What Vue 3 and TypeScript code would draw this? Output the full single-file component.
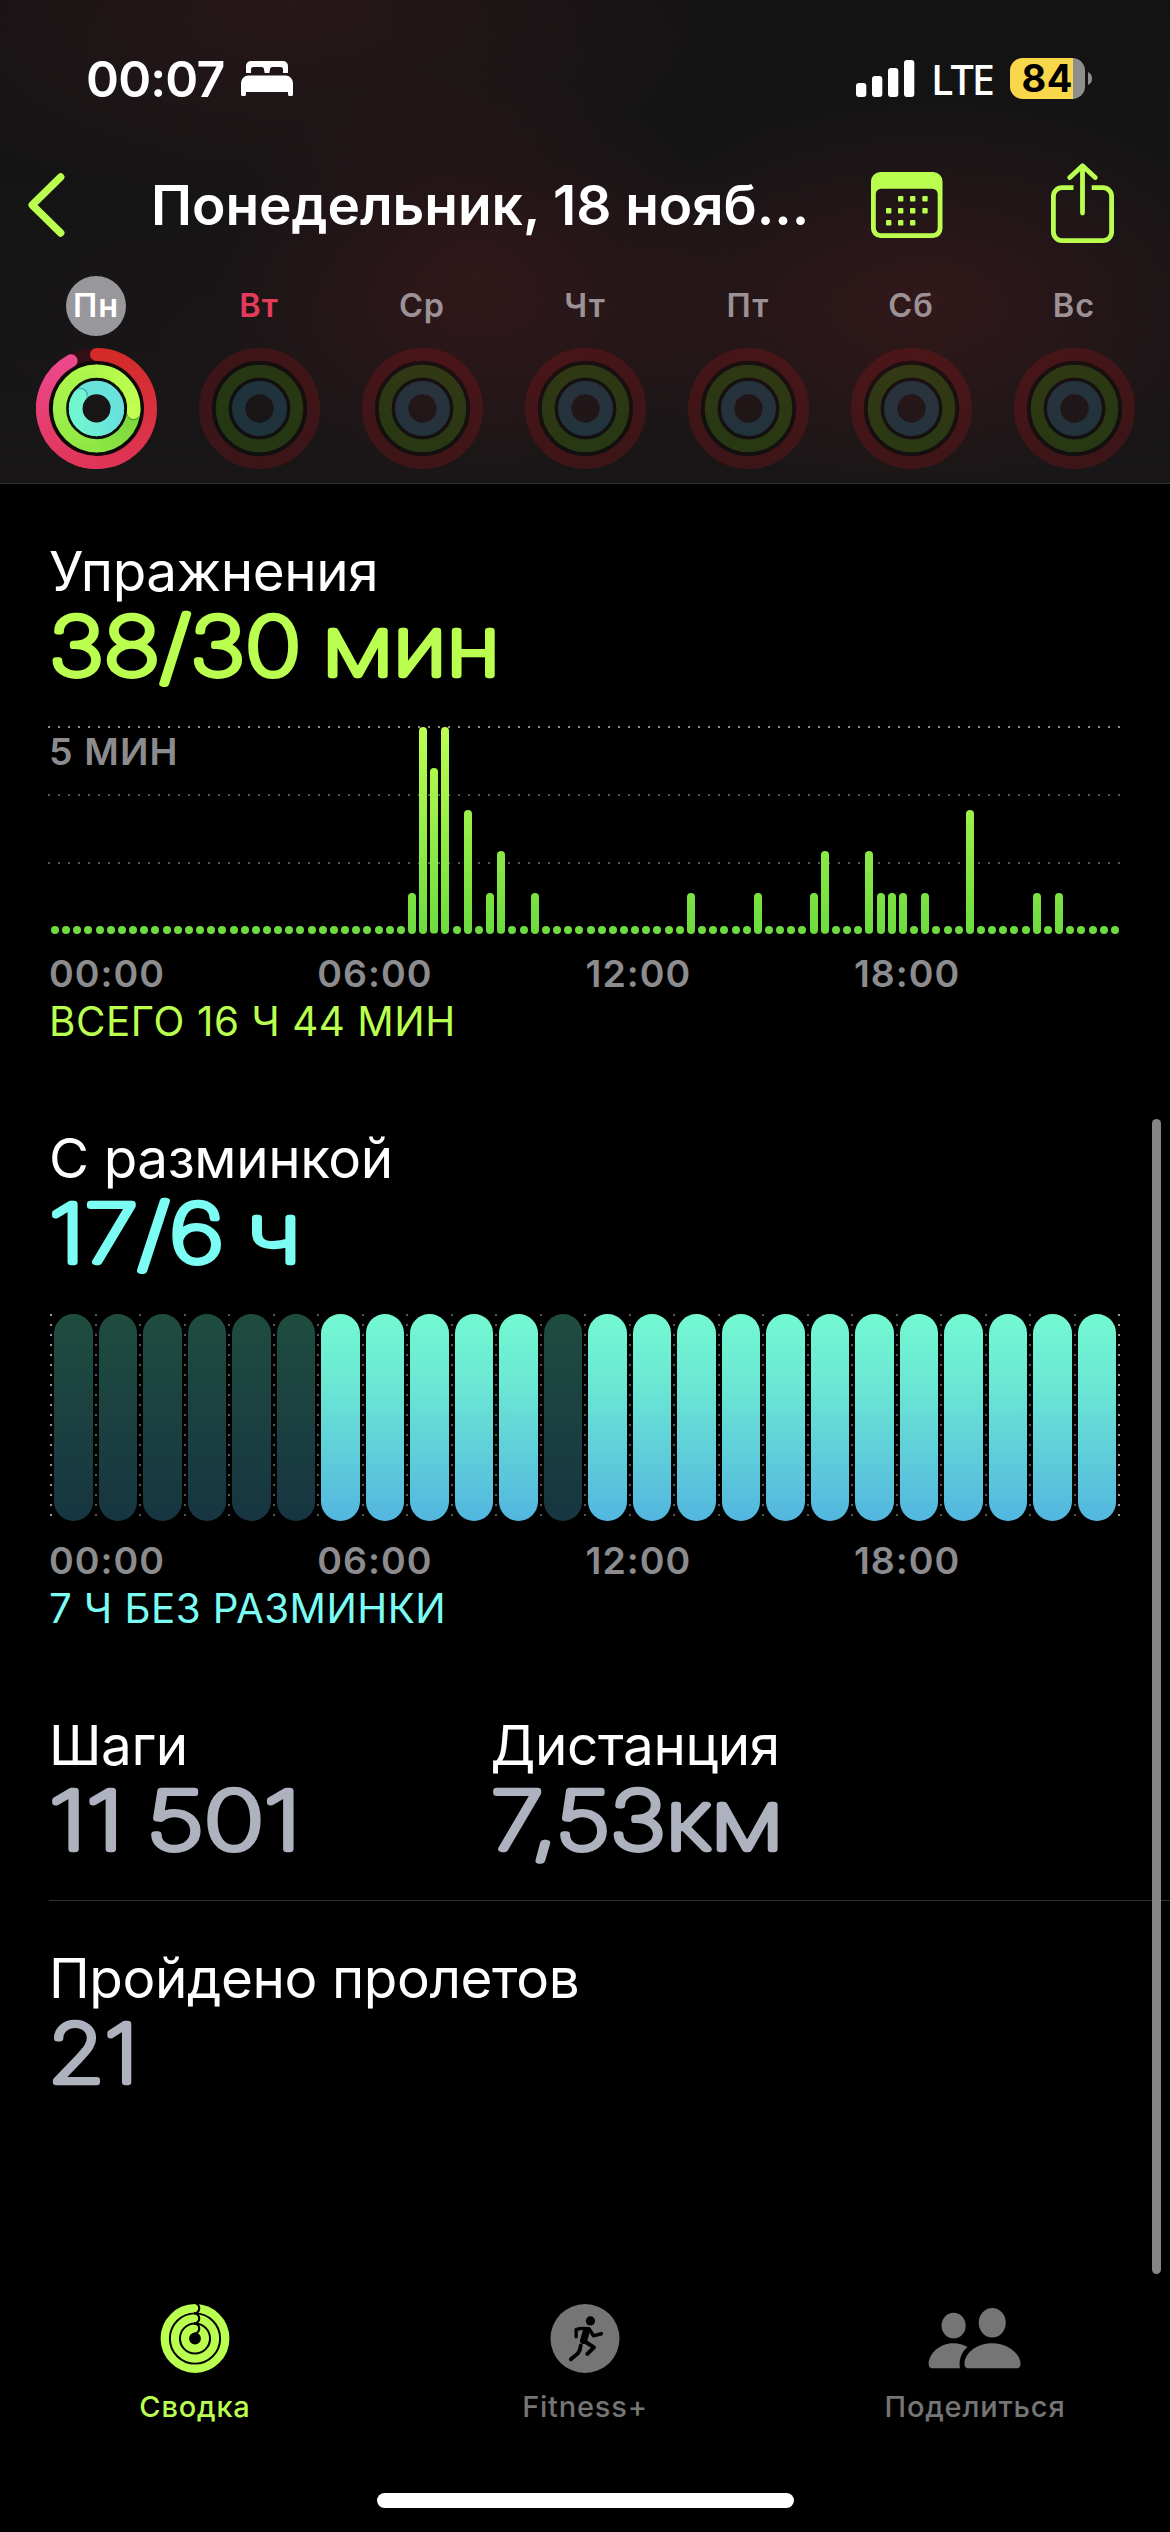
<script setup lang="ts">
interface Day {
  name: string
  state: 'selected' | 'today' | 'future'
}

const days: Day[] = [
  { name: 'Пн', state: 'selected' },
  { name: 'Вт', state: 'today' },
  { name: 'Ср', state: 'future' },
  { name: 'Чт', state: 'future' },
  { name: 'Пт', state: 'future' },
  { name: 'Сб', state: 'future' },
  { name: 'Вс', state: 'future' },
]

const hours: string[] = ['00:00', '06:00', '12:00', '18:00']

// Exercise minutes per quarter of an hour, keyed by slot number (96 slots a day).
const exerciseSlots: Record<number, number> = {
  32: 1, 33: 5, 34: 4, 35: 5, 37: 3, 39: 1, 40: 2, 43: 1,
  57: 1, 63: 1, 68: 1, 69: 2, 73: 2, 74: 1, 75: 1, 76: 1, 78: 1,
  82: 3, 88: 1, 90: 1,
}
const exercise: number[] = Array.from({ length: 96 }, (_, i) => exerciseSlots[i] ?? 0)

const idleHours = new Set<number>([0, 1, 2, 3, 4, 5, 11])
const stand: boolean[] = Array.from({ length: 24 }, (_, i) => !idleHours.has(i))

const barHeight = (minutes: number): string => (minutes ? `${minutes * 41.4}px` : '8px')
</script>

<template>
  <div class="screen">
    <header class="header">
      <div class="status">
        <span class="clock">00:07</span>
        <svg class="bed" width="52" height="35" viewBox="0 0 52 35" fill="#fff">
          <path d="M5 12V5a5 5 0 0 1 5-5h32a5 5 0 0 1 5 5v7h-5V8.500a2.500 2.500 0 0 0-2.500-2.500h-8a2.500 2.500 0 0 0-2.500 2.500L28.300 12h-4.600L23 8.500A2.500 2.500 0 0 0 20.500 6h-8A2.500 2.500 0 0 0 10 8.500V12z" />
          <path d="M0 22a7.500 7.500 0 0 1 7.500-7.500h37A7.500 7.500 0 0 1 52 22v11.500a1.500 1.500 0 0 1-1.500 1.500h-2a1.500 1.500 0 0 1-1.500-1.500V31H5v2.500A1.500 1.500 0 0 1 3.500 35h-2A1.500 1.500 0 0 1 0 33.500z" />
        </svg>
        <svg class="signal" width="59" height="37" viewBox="0 0 59 37" fill="#fff">
          <rect x="0" y="23" width="10.300" height="14" rx="3" />
          <rect x="16" y="16" width="10.300" height="21" rx="3" />
          <rect x="32" y="8" width="10.300" height="29" rx="3" />
          <rect x="48" y="0" width="10.300" height="37" rx="3" />
        </svg>
        <span class="network">LTE</span>
        <div class="battery"><span>84</span></div>
        <svg class="nub" width="4" height="13" viewBox="0 0 4 13"><path d="M0 0Q4 2 4 6.500T0 13z" fill="#8e8e8e" /></svg>
      </div>

      <div class="nav">
        <svg class="back" width="37" height="64" viewBox="0 0 37 64" fill="none" stroke="#baff4f" stroke-width="7.400" stroke-linecap="round" stroke-linejoin="round">
          <path d="M32.700 4L4.200 32l28.500 28" />
        </svg>
        <h1 class="title">Понедельник, 18 нояб...</h1>
        <svg class="calendar" width="72" height="66" viewBox="0 0 72 66" fill="#baff4f">
          <path fill-rule="evenodd" d="M9.500 0h52.500a9.500 9.500 0 0 1 9.500 9.500v47A9.500 9.500 0 0 1 62 66H9.500A9.500 9.500 0 0 1 0 56.500v-47A9.500 9.500 0 0 1 9.500 0zM10 16.700a5.200 5.200 0 0 0-5.200 5.200V56a5.200 5.200 0 0 0 5.200 5.200h51.500a5.200 5.200 0 0 0 5.200-5.200V21.900a5.200 5.200 0 0 0-5.200-5.200z" />
          <g>
            <rect x="27" y="24" width="5.400" height="5.400" rx="1" /><rect x="39" y="24" width="5.400" height="5.400" rx="1" /><rect x="51.300" y="24" width="5.400" height="5.400" rx="1" />
            <rect x="15" y="36" width="5.400" height="5.400" rx="1" /><rect x="27" y="36" width="5.400" height="5.400" rx="1" /><rect x="39" y="36" width="5.400" height="5.400" rx="1" /><rect x="51.300" y="36" width="5.400" height="5.400" rx="1" />
            <rect x="15" y="48" width="5.400" height="5.400" rx="1" /><rect x="27" y="48" width="5.400" height="5.400" rx="1" /><rect x="39" y="48" width="5.400" height="5.400" rx="1" />
          </g>
        </svg>
        <svg class="share" width="63" height="80" viewBox="0 0 63 80" fill="none" stroke="#baff4f" stroke-width="4.800">
          <path d="M22.500 24.700H11a8.600 8.600 0 0 0-8.600 8.600V69a8.600 8.600 0 0 0 8.600 8.600h41a8.600 8.600 0 0 0 8.600-8.600V33.300a8.600 8.600 0 0 0-8.600-8.600H40.700" />
          <path d="M31.500 50V2.800M18.800 14.500L31.500 2.800l12.700 11.700" stroke-linecap="round" stroke-linejoin="round" />
        </svg>
      </div>

      <div class="week">
        <div v-for="day in days" :key="day.name" class="day">
          <span class="day-name" :class="day.state">{{ day.name }}</span>
          <svg v-if="day.state === 'selected'" class="rings" width="121" height="121" viewBox="-60.500 -60.500 121 121" fill="none" stroke-width="13">
            <defs>
              <linearGradient id="moveRight" x1="0" y1="-60" x2="0" y2="60" gradientUnits="userSpaceOnUse">
                <stop offset="0" stop-color="#d22b26" /><stop offset="1" stop-color="#e03558" />
              </linearGradient>
              <linearGradient id="moveLeft" x1="0" y1="-60" x2="0" y2="60" gradientUnits="userSpaceOnUse">
                <stop offset="0" stop-color="#ee4a93" /><stop offset="1" stop-color="#e03558" />
              </linearGradient>
              <linearGradient id="exLow" x1="40" y1="0" x2="0" y2="40" gradientUnits="userSpaceOnUse">
                <stop offset="0" stop-color="#78d33b" /><stop offset="1" stop-color="#8fe745" />
              </linearGradient>
              <linearGradient id="exLeft" x1="0" y1="44" x2="0" y2="-44" gradientUnits="userSpaceOnUse">
                <stop offset="0" stop-color="#8fe745" /><stop offset="1" stop-color="#b0f84c" />
              </linearGradient>
              <linearGradient id="exTip" x1="0" y1="-40" x2="30" y2="10" gradientUnits="userSpaceOnUse">
                <stop offset="0" stop-color="#b0f84c" /><stop offset="1" stop-color="#c2ff50" />
              </linearGradient>
              <linearGradient id="standTip" x1="20" y1="0" x2="-20" y2="0" gradientUnits="userSpaceOnUse">
                <stop offset="0" stop-color="#69e2dc" /><stop offset="1" stop-color="#70f6d0" />
              </linearGradient>
            </defs>
            <circle r="54" stroke="#330e14" />
            <circle r="45.700" stroke="#0e080a" stroke-width="4" />
            <circle r="29" stroke="#0c0f0a" stroke-width="4" />
            <path d="M0 54A54 54 0 0 1 -25.400 -47.700" stroke="url(#moveLeft)" stroke-linecap="round" />
            <path d="M0 -54A54 54 0 0 1 0 54" stroke="url(#moveRight)" stroke-linecap="round" />
            <path d="M0 54A54 54 0 0 1 -20 50.160" stroke="#e03558" />
            <path d="M37.300 0A37.300 37.300 0 0 1 0 37.300" stroke="url(#exLow)" stroke-width="13.300" />
            <path d="M.5 37.300A37.300 37.300 0 0 1 0 -37.300" stroke="url(#exLeft)" stroke-width="13.300" />
            <circle cx="37" cy="5.200" r="6.600" fill="#4c9226" opacity=".8" />
            <path d="M-.5 -37.300A37.300 37.300 0 0 1 37.150 3.500" stroke="url(#exTip)" stroke-width="13.300" />
            <circle cx="37.100" cy="3.800" r="6.650" fill="#c2ff50" />
            <circle r="20.900" stroke="#69e2dc" stroke-width="13.500" />
            <circle cx="-15.500" cy="-13.900" r="6.900" fill="#3fa79b" opacity=".75" />
            <path d="M20.900 0A20.900 20.900 0 0 1 -20.900 0A20.900 20.900 0 0 1 -16.500 -12.800" stroke="url(#standTip)" stroke-width="13.500" />
            <circle cx="-16.500" cy="-12.800" r="6.700" fill="#70f6d0" />
          </svg>
          <svg v-else class="rings" width="121" height="121" viewBox="-60.500 -60.500 121 121" fill="none" stroke-width="13">
            <circle r="54" stroke="#f0141e" stroke-opacity=".17" />
            <circle r="45.700" stroke="#000" stroke-opacity=".3" stroke-width="4" />
            <circle r="37.300" stroke="#62e400" stroke-opacity=".17" />
            <circle r="29" stroke="#000" stroke-opacity=".3" stroke-width="4" />
            <circle r="20.900" stroke="#3fb9e6" stroke-opacity=".18" stroke-width="13.500" />
          </svg>
        </div>
      </div>
    </header>

    <main class="content">
      <section class="block exercise">
        <h2 class="label">Упражнения</h2>
        <svg class="value" width="620" height="92">
          <text x="0" y="71" textLength="451" lengthAdjust="spacingAndGlyphs">38/30 мин</text>
        </svg>
        <div class="chart">
          <span class="limit">5 МИН</span>
          <i class="grid-line top"></i>
          <i class="grid-line mid"></i>
          <i class="grid-line low"></i>
          <div class="bars">
            <i v-for="(m, i) in exercise" :key="i" class="bar" :style="{ height: barHeight(m) }"></i>
          </div>
        </div>
        <div class="axis"><span v-for="h in hours" :key="h">{{ h }}</span></div>
        <p class="total">ВСЕГО 16 Ч 44 МИН</p>
      </section>

      <section class="block stand">
        <h2 class="label">С разминкой</h2>
        <svg class="value" width="620" height="92">
          <text x="0" y="71" textLength="252" lengthAdjust="spacingAndGlyphs">17/6 ч</text>
        </svg>
        <div class="chart hours">
          <div v-for="(active, i) in stand" :key="i" class="hour">
            <i class="dots" :class="{ edge: i === 0 }"></i>
            <i class="pill" :class="{ idle: !active }"></i>
          </div>
          <i class="dots edge"></i>
        </div>
        <div class="axis"><span v-for="h in hours" :key="h">{{ h }}</span></div>
        <p class="total">7 Ч БЕЗ РАЗМИНКИ</p>
      </section>

      <section class="metrics">
        <div class="metric steps">
          <h2 class="label">Шаги</h2>
          <svg class="value" width="400" height="92">
            <text x="0" y="71" textLength="252" lengthAdjust="spacingAndGlyphs">11 501</text>
          </svg>
        </div>
        <div class="metric">
          <h2 class="label">Дистанция</h2>
          <svg class="value" width="500" height="92">
            <text x="0" y="71" textLength="292" lengthAdjust="spacingAndGlyphs">7,53км</text>
          </svg>
        </div>
      </section>
      <section class="metrics last">
        <div class="metric">
          <h2 class="label">Пройдено пролетов</h2>
          <svg class="value" width="620" height="92">
            <text x="-1" y="71" textLength="90" lengthAdjust="spacingAndGlyphs">21</text>
          </svg>
        </div>
      </section>
    </main>

    <nav class="tabs">
      <a class="tab active">
        <svg width="70" height="70" viewBox="0 0 70 70" fill="none" stroke="#baff4f">
          <circle cx="35" cy="35" r="30.700" stroke-width="8.400" />
          <circle cx="35" cy="35" r="20.400" stroke-width="8.200" />
          <circle cx="35" cy="35" r="10.100" stroke-width="8.200" />
          <g fill="none" stroke="#000" stroke-width="2.200">
            <path d="M34 -1a5.300 5.300 0 0 1 0 10.600" />
            <path d="M34 9.300a5.300 5.300 0 0 1 0 10.600" />
            <path d="M34 19.600a5.300 5.300 0 0 1 0 10.600" />
          </g>
        </svg>
        <span>Сводка</span>
      </a>
      <a class="tab">
        <svg width="70" height="70" viewBox="0 0 70 70" fill="none" stroke="#000" stroke-linecap="round" stroke-linejoin="round">
          <circle cx="35" cy="35" r="35" fill="#757575" stroke="none" />
          <circle cx="40.500" cy="17.200" r="4.700" fill="#000" stroke="none" />
          <path d="M26 33.200V26q3-1.200 8.500-1.200" stroke-width="3.400" />
          <path d="M36.600 26.700L33.600 37" stroke-width="7.200" />
          <path d="M39 25.200l4.600 7 8-2" stroke-width="3.600" />
          <path d="M34.500 37.800l9.600 6.200-6.700 6.600" stroke-width="4" />
          <path d="M30.700 42q-.4 5-3 8.200L20.600 56" stroke-width="3.900" />
        </svg>
        <span>Fitness+</span>
      </a>
      <a class="tab">
        <svg width="94" height="70" viewBox="0 0 94 70" fill="#757575">
          <ellipse cx="25.300" cy="22" rx="12.200" ry="13" />
          <ellipse cx="64.500" cy="19" rx="13.700" ry="15" />
          <path d="M4.500 65.300C1.500 65.300 0 63.500 0 61 0 50.500 11 39.700 25 39.700c5.600 0 10.500 1.400 14.500 3.900C33 49 30.500 56.500 31.700 65.300z" />
          <path d="M41 65.300c-3.200 0-4.700-1.600-4.700-4.500C36.300 50 48 39.700 64.500 39.700S93.200 51 93.200 60.800c0 2.900-1.500 4.500-4.700 4.500z" />
        </svg>
        <span>Поделиться</span>
      </a>
    </nav>
    <div class="home"></div>
    <div class="scrollbar"></div>
  </div>
</template>

<style>
html,
body {
  background: #000;
}
</style>

<style scoped>
.screen {
  position: relative;
  display: flex;
  flex-direction: column;
  width: 1170px;
  height: 2532px;
  overflow: hidden;
  background: #000;
  color: #fff;
  font-family: Inter, "Noto Sans", sans-serif;
}

h1,
h2,
p {
  margin: 0;
}

/* Header */
.header {
  box-sizing: border-box;
  height: 484px;
  border-bottom: 1px solid #303030;
  background:
    radial-gradient(ellipse 330px 200px at 930px 300px, rgba(110, 30, 34, 0.28), transparent),
    radial-gradient(ellipse 260px 210px at 475px 275px, rgba(110, 28, 34, 0.26), transparent),
    radial-gradient(ellipse 430px 210px at 290px 0, rgba(100, 34, 36, 0.24), transparent),
    radial-gradient(ellipse 620px 170px at 600px 330px, rgba(70, 24, 28, 0.16), transparent),
    linear-gradient(#141314, #181617);
}

.status {
  display: flex;
  align-items: center;
  height: 157px;
  padding-left: 86px;
}

.clock {
  width: 155px;
  font-size: 50px;
  font-weight: 600;
  letter-spacing: -0.85px;
  line-height: 60px;
}

.signal {
  margin-left: 563px;
}

.network {
  width: 78px;
  margin-left: 16px;
  font-family: "Noto Sans", Inter, sans-serif;
  font-size: 41.5px;
  font-weight: 500;
  letter-spacing: -1.9px;
  line-height: 56px;
}

.battery {
  flex: none;
  width: 75px;
  height: 41px;
  margin-left: 1px;
  border-radius: 12.5px;
  background: linear-gradient(to right, #f8d74a 63px, #8e8e8e 63px);
  color: #000;
  font-size: 38px;
  font-weight: 700;
  letter-spacing: 0.5px;
  line-height: 41px;
}

.battery span {
  margin-left: 11.500px;
}

.nub {
  margin-left: 3px;
}

.nav {
  display: flex;
  align-items: center;
  height: 96px;
  padding-left: 28px;
  padding-bottom: 1px;
}

.title {
  width: 719.500px;
  margin-left: 86px;
  font-size: 55px;
  font-weight: 600;
  letter-spacing: -0.05px;
  line-height: 70px;
  white-space: nowrap;
}

.share {
  margin-left: 108px;
  margin-bottom: 5px;
}

.week {
  display: flex;
  padding: 22px 14.500px 0;
}

.day {
  display: flex;
  flex-direction: column;
  align-items: center;
  width: 163px;
}

.day-name {
  width: 60px;
  height: 60px;
  border-radius: 50%;
  color: #9c9195;
  font-size: 32.500px;
  font-weight: 600;
  letter-spacing: 1px;
  line-height: 60px;
  text-align: center;
}

.day-name.selected {
  background: #98979b;
  color: #fff;
}

.day-name.today {
  color: #e53b5b;
}

.rings {
  margin-top: 11.500px;
}

/* Sections */
.content {
  flex: 1;
  padding: 54px 0 0 49px;
}

.block {
  margin-bottom: 79px;
}

.label {
  font-size: 54.800px;
  font-weight: 400;
  letter-spacing: -0.4px;
  line-height: 66px;
  white-space: nowrap;
}

.value {
  display: block;
  overflow: visible;
  fill: currentColor;
  stroke: currentColor;
  stroke-width: 6.400px;
  stroke-linejoin: round;
  font-size: 80px;
  font-weight: 130;
  word-spacing: -4px;
}

.exercise .value,
.exercise .total {
  color: #baff4f;
}

.stand .value,
.stand .total {
  color: #7cfdf4;
}

.stand .total {
  letter-spacing: 0.45px;
}

.chart {
  position: relative;
  height: 208px;
  margin-top: 30px;
}

.limit {
  position: absolute;
  top: 2px;
  left: 0;
  color: #8c8c8e;
  font-size: 37.500px;
  font-weight: 600;
  letter-spacing: 1.100px;
  line-height: 48px;
}

.grid-line {
  position: absolute;
  left: -1px;
  width: 1072px;
  height: 2px;
  background: repeating-linear-gradient(to right, #565656 0 2px, transparent 2px 10px);
}

.grid-line.top {
  top: 0;
  background: repeating-linear-gradient(to right, #8f8f8f 0 2px, transparent 2px 10px);
}

.grid-line.mid {
  top: 68px;
}

.grid-line.low {
  top: 136px;
}

.bars {
  position: relative;
  display: flex;
  align-items: flex-end;
  justify-content: space-between;
  width: 1068px;
  height: 208px;
  margin-left: 2px;
}

.bar {
  width: 8px;
  border-radius: 4px;
  background: linear-gradient(#bdff50, #6cdb3f) bottom / 100% 207px no-repeat;
}

.hours {
  display: flex;
  width: 1070px;
  margin-left: 1px;
}

.hour {
  display: flex;
  flex: 1;
}

.dots {
  flex: none;
  width: 2px;
  margin-top: 1px;
  background: repeating-linear-gradient(#565656 0 2px, transparent 2px 10px);
}

.dots.edge {
  background: repeating-linear-gradient(#9a9a9a 0 2px, transparent 2px 10px);
}

.pill {
  flex: 1;
  margin: 1px 2px 0;
  border-radius: 20px;
  background: linear-gradient(#74f9d1, #6be6d4 35%, #53b6df);
}

.pill.idle {
  background: linear-gradient(#1f4c3f, #1c4340 40%, #163541);
}

.axis {
  display: flex;
  margin-top: 16px;
  color: #8c8c8e;
  font-size: 37.500px;
  font-weight: 600;
  letter-spacing: 1px;
  line-height: 48px;
}

.axis span {
  width: 268.300px;
}

.total {
  font-size: 40.300px;
  letter-spacing: 0.6px;
  line-height: 48px;
}

.metrics {
  display: flex;
}

.metrics .value {
  color: #aeb2bf;
}

.steps {
  width: 441.500px;
}

.metrics.last {
  margin-top: 30px;
  padding-top: 44px;
  border-top: 1px solid #303032;
}

/* Tab bar */
.tabs {
  display: flex;
  height: 123px;
}

.tab {
  display: flex;
  flex: 1;
  flex-direction: column;
  align-items: center;
  color: #757575;
  font-size: 29px;
  font-weight: 500;
  letter-spacing: 0.8px;
  line-height: 40px;
}

.tab span {
  margin-top: 14px;
}

.tab.active {
  color: #baff4f;
}

.home {
  width: 417px;
  height: 15px;
  margin: 66px auto 24px;
  border-radius: 8px;
  background: #fff;
}

.scrollbar {
  position: absolute;
  top: 1119px;
  right: 9px;
  width: 9px;
  height: 1155px;
  border-radius: 5px;
  background: #858585;
}
</style>
